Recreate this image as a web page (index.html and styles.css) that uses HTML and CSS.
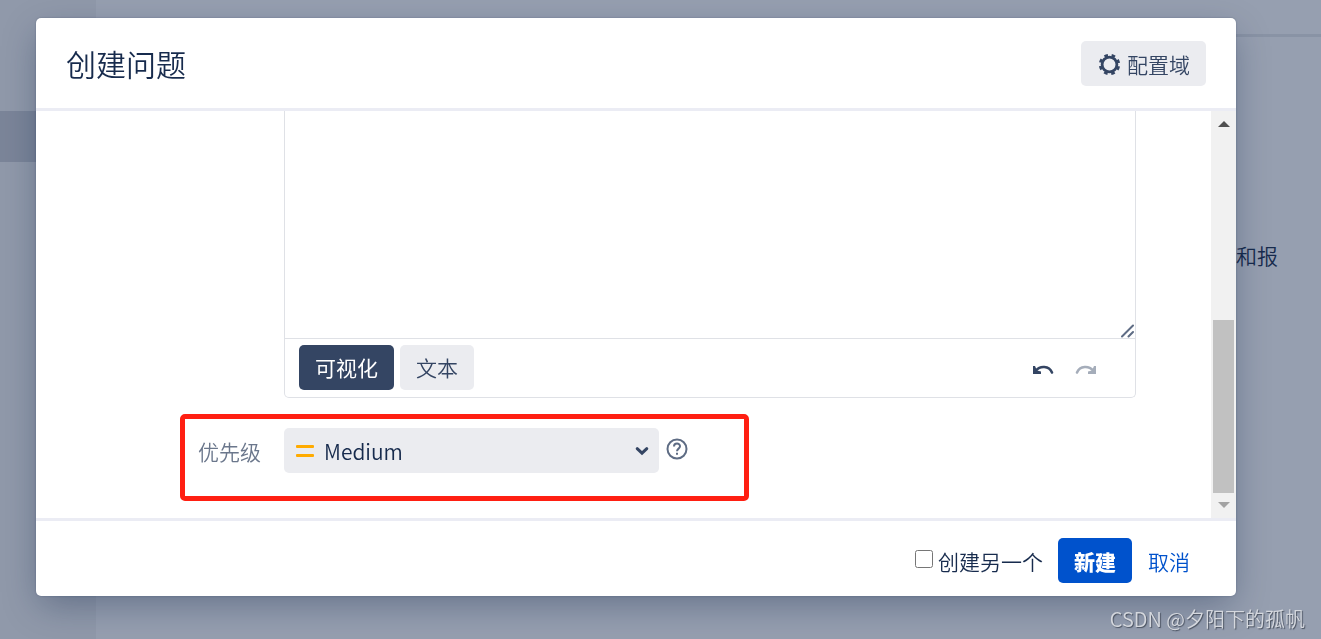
FILE: index.html
```html
<!DOCTYPE html>
<html lang="zh-CN">
<head>
    <meta charset="UTF-8">
    <meta name="viewport" content="width=device-width, initial-scale=1.0">
    <title>创建问题</title>
    <link rel="stylesheet" href="styles.css">
</head>

<body>

    <div class="page">
        <aside class="sidebar">
            <div class="sidebar-item"></div>
        </aside>
        <main class="content">
            <div class="topbar"></div>
            <p class="intro">和报</p>
        </main>
    </div>

    <div class="overlay">
        <form class="dialog" role="dialog" aria-labelledby="dialog-title">
            <header class="dialog-header">
                <h1 id="dialog-title">创建问题</h1>
                <button type="button" class="btn btn-config">
                    <svg width="22" height="22" viewBox="0 0 22 22" fill="none" stroke="currentColor">
                        <circle cx="10.500" cy="11.500" r="7.400" stroke-width="2.800" />
                        <circle cx="10.500" cy="11.500" r="9.300" stroke-width="2.800" stroke-dasharray="3.600 3.704" stroke-dashoffset="-1.850" />
                    </svg>
                    配置域
                </button>
            </header>

            <div class="dialog-body">
                <div class="fields">
                    <div class="editor">
                        <div class="editor-area">
                            <textarea aria-label="描述"></textarea>
                            <svg class="grip" width="14" height="14" viewBox="0 0 14 14" stroke="#5e6c84" stroke-width="2" stroke-linecap="round">
                                <path d="M1 12.500 12 1.500M7.500 12.500 12 8" />
                            </svg>
                        </div>
                        <div class="editor-bar">
                            <button type="button" class="btn btn-active">可视化</button>
                            <button type="button" class="btn">文本</button>
                            <div class="history">
                                <button type="button" class="icon-btn" aria-label="撤销">
                                    <svg width="22" height="10" viewBox="0 0 22 10" fill="none" stroke="currentColor">
                                        <path d="M4 5.500C8 .500 17 .500 20 7.500" stroke-width="2.600" stroke-linecap="round" />
                                        <path d="M1 1v8h8V6.500L5 5.500 3 1z" fill="currentColor" stroke="none" />
                                    </svg>
                                </button>
                                <button type="button" class="icon-btn" aria-label="重做" disabled>
                                    <svg width="22" height="10" viewBox="0 0 22 10" fill="none" stroke="currentColor">
                                        <path d="M18 5.500C14 .500 5 .500 2 7.500" stroke-width="2.600" stroke-linecap="round" />
                                        <path d="M21 1v8h-8V6.500l4-1L19 1z" fill="currentColor" stroke="none" />
                                    </svg>
                                </button>
                            </div>
                        </div>
                    </div>

                    <div class="priority">
                        <label for="priority">优先级</label>
                        <div class="select">
                            <svg class="level" width="18" height="12" viewBox="0 0 18 12" fill="#ffab00">
                                <rect width="18" height="3" rx="1" />
                                <rect y="9" width="18" height="3" rx="1" />
                            </svg>
                            <select id="priority">
                                <option>Medium</option>
                            </select>
                            <svg class="arrow" width="14" height="10" viewBox="0 0 14 10" fill="none" stroke="#344563" stroke-width="3" stroke-linecap="round">
                                <path d="M2.200 2.700 7 7.200 11.800 2.700" />
                            </svg>
                        </div>
                        <button type="button" class="icon-btn help" aria-label="帮助">
                            <svg width="22" height="22" viewBox="0 0 22 22" fill="none" stroke="currentColor" stroke-width="2">
                                <circle cx="11" cy="11" r="9.500" />
                                <path d="M8 8.600C8 4.300 14 4.500 14 8.300 14 10.700 11 10.600 11 13.300" />
                                <path d="M11 14.800v2" />
                            </svg>
                        </button>
                    </div>
                </div>

                <!-- scrollbar -->
                <div class="scrollbar">
                    <svg width="12" height="6" viewBox="0 0 12 6" fill="#505050"><path d="M0 6 6 0l6 6z" /></svg>
                    <div class="thumb"></div>
                    <svg width="12" height="6" viewBox="0 0 12 6" fill="#a3a3a3"><path d="M0 0h12L6 6z" /></svg>
                </div>
            </div>

            <footer class="dialog-footer">
                <input type="checkbox" id="another">
                <label for="another">创建另一个</label>
                <button type="submit" class="btn btn-primary">新建</button>
                <a href="#" class="cancel">取消</a>
            </footer>
        </form>
    </div>

    <div class="watermark">CSDN @夕阳下的孤帆</div>

</body>

</html>
```
FILE: styles.css
```css
* {
    box-sizing: border-box;
}

body {
    margin: 0;
    overflow: hidden;
    color: #172b4d;
    font: 350 21px/30px "Noto Sans CJK SC", sans-serif;
}

svg {
    display: block;
    flex: none;
}

button,
select,
textarea {
    font: inherit;
    color: inherit;
}

/* page behind the dialog */
.page {
    display: flex;
    min-height: 100vh;
}

.sidebar {
    width: 96px;
    padding-top: 111px;
    background-color: #9099aa;
}

.sidebar-item {
    height: 51px;
    background-color: #7b8599;
}

.content {
    flex: 1;
    background-color: #969fb0;
}

.topbar {
    height: 37px;
    border-bottom: 3px solid #8993a5;
}

.intro {
    margin: 203px 43px 0 0;
    text-align: right;
}

/* dialog */
.overlay {
    position: fixed;
    inset: 0;
    display: flex;
    padding: 18px 85px 43px 36px;
}

.dialog {
    flex: 1;
    display: flex;
    flex-direction: column;
    background-color: #fff;
    border-radius: 5px;
    box-shadow: 0 0 2px rgba(9, 30, 66, 0.3), 0 12px 36px -4px rgba(9, 30, 66, 0.35);
}

.dialog-header {
    display: flex;
    align-items: center;
    justify-content: space-between;
    height: 93px;
    padding: 0 30px;
    border-bottom: 3px solid #ebecf4;
}

.dialog-header h1 {
    margin: 0;
    font-size: 30px;
    font-weight: 350;
    line-height: 36px;
}

.btn {
    display: flex;
    align-items: center;
    gap: 6px;
    height: 45px;
    padding: 0 16px;
    border: 0;
    border-radius: 5px;
    background-color: #ebecf0;
    color: #344563;
}

.btn-config {
    padding: 1px 16px 0 18px;
}

.btn-active {
    background-color: #344563;
    color: #fff;
    font-weight: 400;
}

.btn-primary {
    background-color: #0052cc;
    color: #fff;
    font-weight: 900;
}

.icon-btn {
    padding: 0;
    border: 0;
    background: none;
    color: #344563;
}

.icon-btn:disabled {
    color: #a5adba;
}

.dialog-body {
    flex: 1;
    display: flex;
    min-height: 0;
}

.fields {
    flex: 1;
}

.editor {
    margin: 0 75px 16px 248px;
    border: 1px solid #dfe1e6;
    border-top: 0;
    border-radius: 0 0 5px 5px;
}

.editor-area {
    position: relative;
    border-bottom: 1px solid #dfe1e6;
}

.editor-area textarea {
    display: block;
    width: 100%;
    height: 227px;
    border: 0;
    resize: none;
    outline: none;
}

.grip {
    position: absolute;
    right: 0;
    bottom: 0;
}

.editor-bar {
    display: flex;
    align-items: center;
    gap: 6px;
    height: 58px;
    padding: 0 38px 2px 14px;
}

.history {
    display: flex;
    gap: 21px;
    margin-left: auto;
    padding-top: 5px;
}

/* highlighted field */
.priority {
    display: flex;
    align-items: flex-start;
    width: 569px;
    height: 87px;
    margin-left: 144px;
    padding: 9px 13px;
    border: 5px solid #ff1f12;
    border-radius: 5px;
}

.priority label {
    width: 86px;
    padding-top: 8px;
    color: #6b778c;
}

.select {
    position: relative;
}

.select select {
    width: 375px;
    height: 45px;
    padding: 0 40px;
    border: 0;
    border-radius: 5px;
    background-color: #ebecf0;
    color: #172b4d;
    appearance: none;
}

.level {
    position: absolute;
    top: 17px;
    left: 12px;
}

.arrow {
    position: absolute;
    top: 18px;
    right: 10px;
}

.help {
    margin: 10px 0 0 7px;
    color: #5e6c84;
}

.scrollbar {
    display: flex;
    flex-direction: column;
    align-items: center;
    width: 25px;
    padding: 10px 0;
    background-color: #f1f1f1;
}

.thumb {
    width: 21px;
    height: 173px;
    margin: auto 0 9px;
    background-color: #c1c1c1;
}

.dialog-footer {
    display: flex;
    align-items: center;
    height: 78px;
    padding: 4px 46px 0;
    border-top: 3px solid #ebecf4;
}

.dialog-footer input {
    width: 18px;
    height: 18px;
    margin: 0 5px 4px auto;
}

.dialog-footer .btn {
    margin: 0 16px 0 15px;
}

.cancel {
    color: #0052cc;
    text-decoration: none;
}

.watermark {
    position: fixed;
    right: 16px;
    bottom: 5px;
    color: #d5d8de;
    font-size: 20px;
    text-shadow: 1px 1px 1px #4a5260;
}
```
